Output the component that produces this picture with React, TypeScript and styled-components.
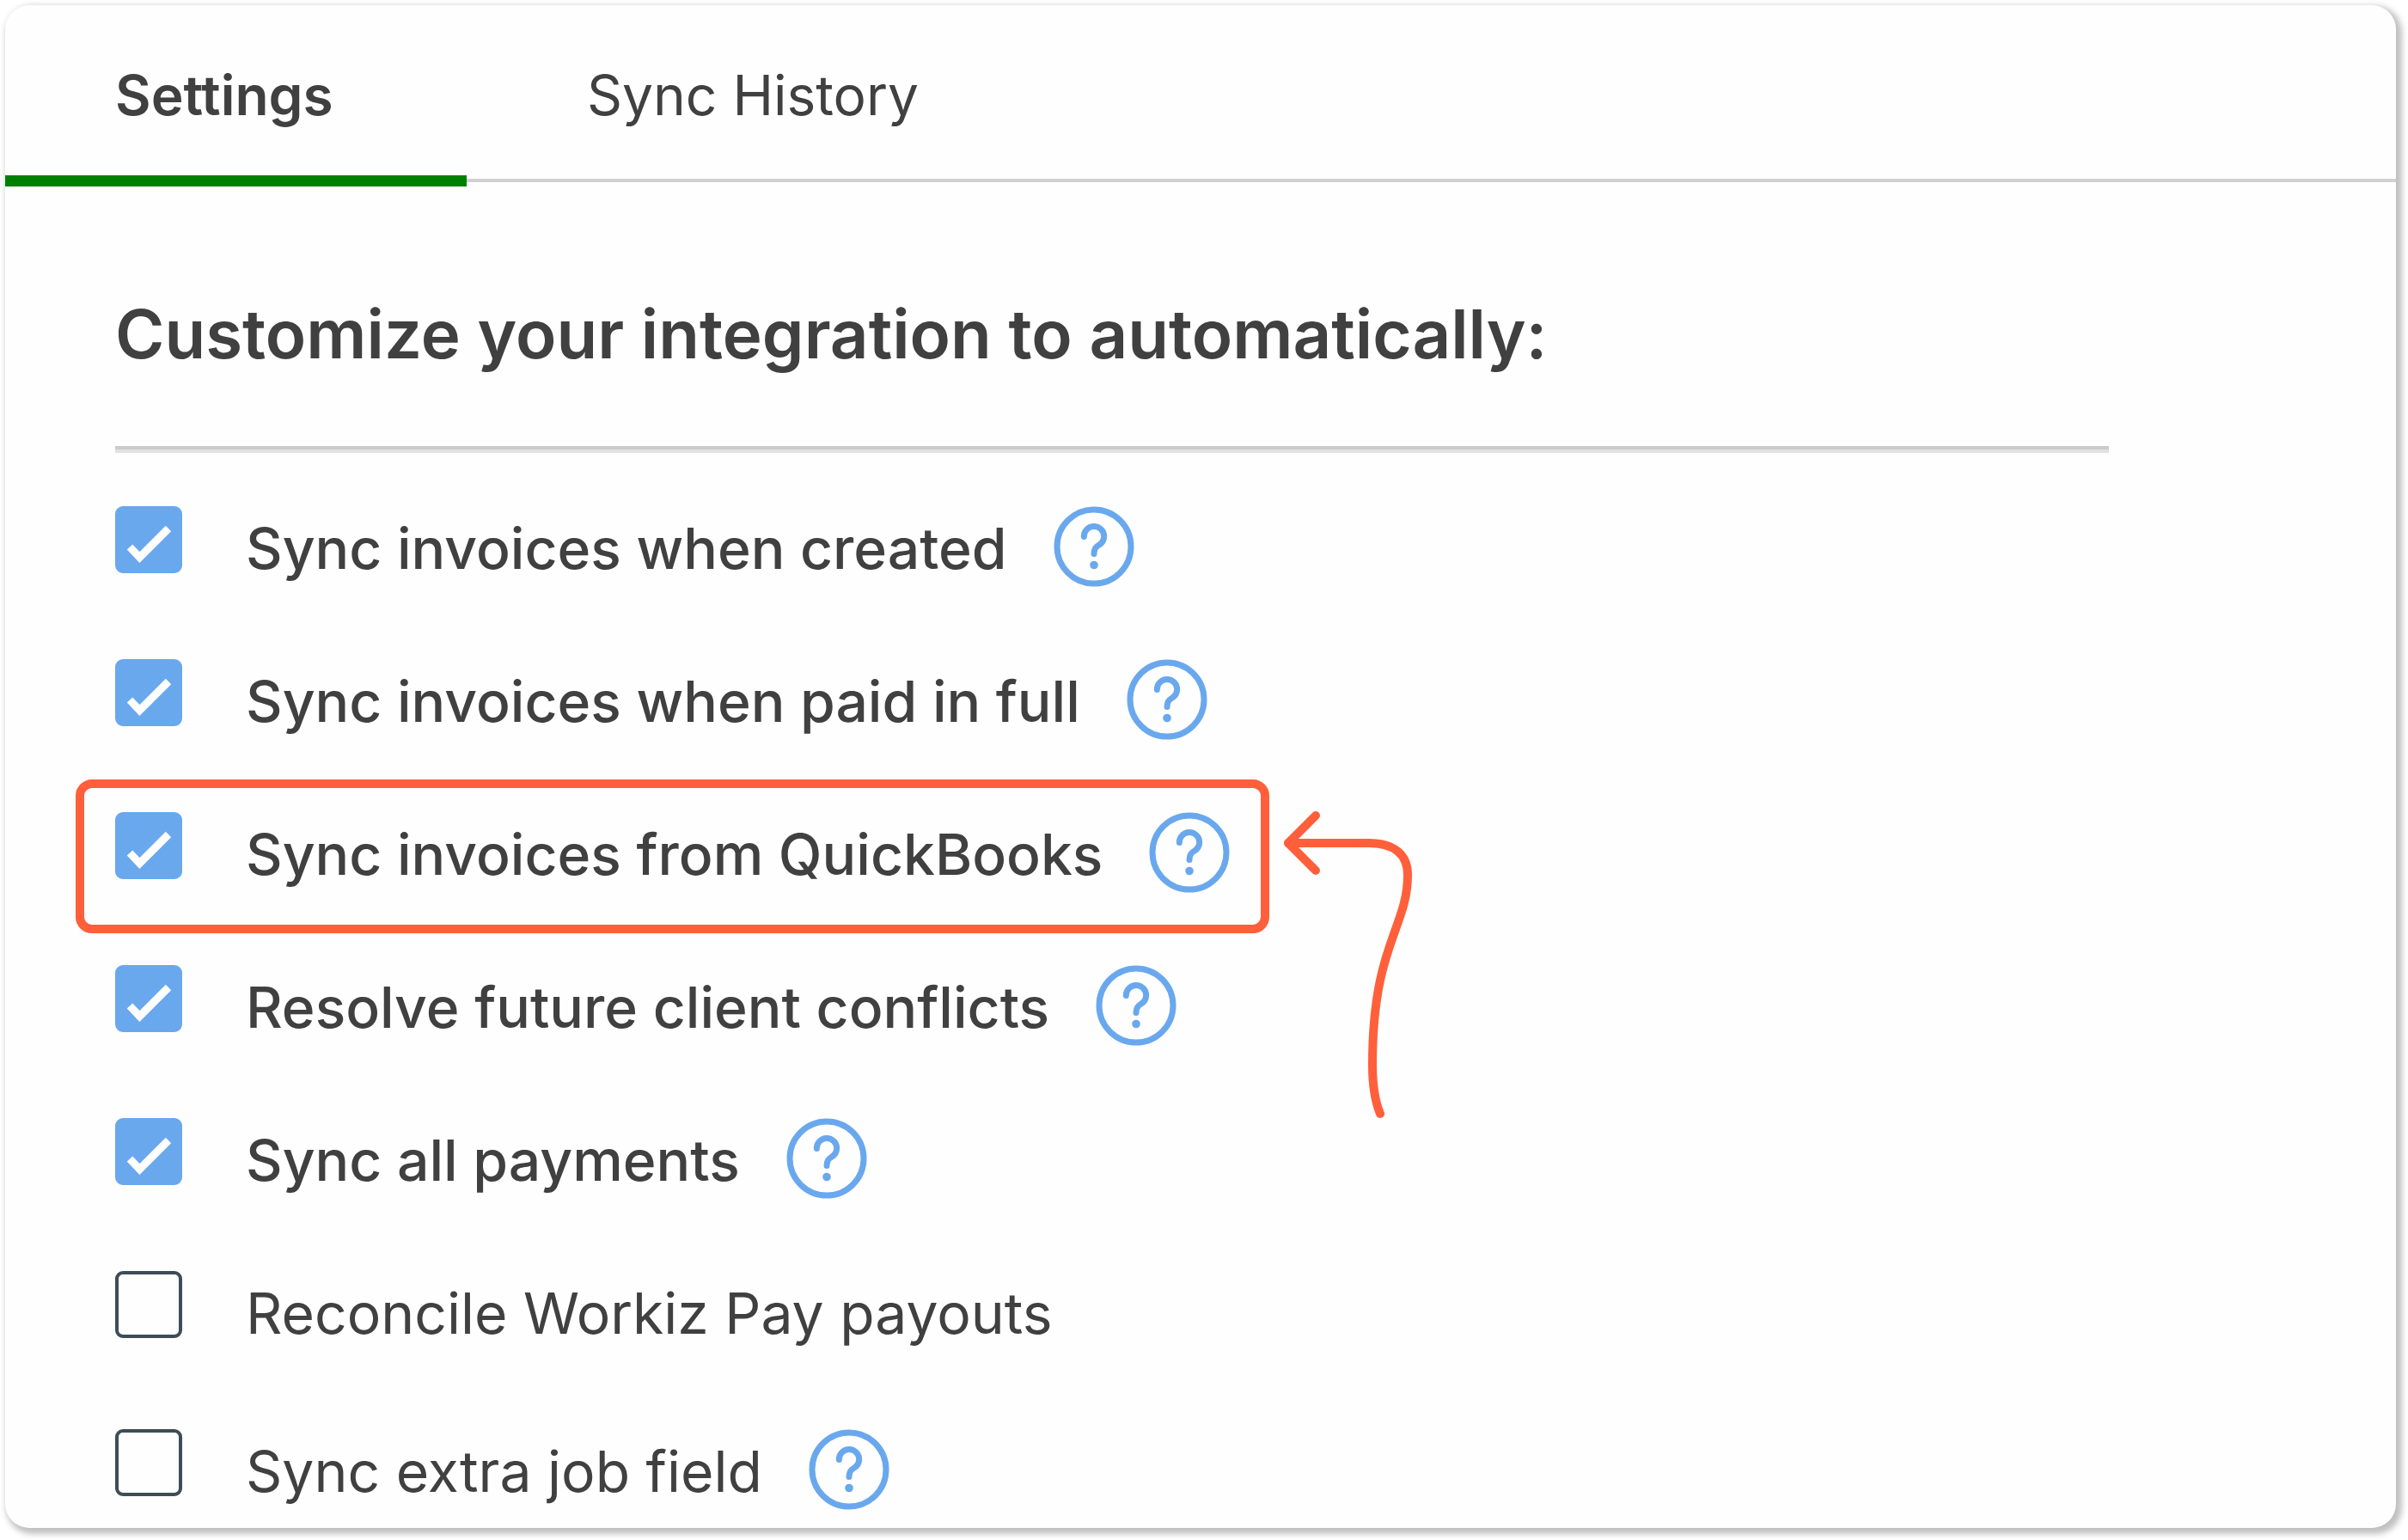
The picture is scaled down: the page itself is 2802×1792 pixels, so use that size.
import React, { useState } from "react";
import styled, { createGlobalStyle } from "styled-components";

const color = {
  text: "#404040",
  blue: "#6aa8ee",
  green: "#008000",
  accent: "#ff5f3b",
  line: "#d1d1d1",
  box: "#3d4d56",
};

const GlobalStyle = createGlobalStyle`
  *, *::before, *::after { box-sizing: border-box; }
  body {
    margin: 0;
    background: #ffffff;
    color: ${color.text};
    font-family: Inter, "Open Sans", sans-serif;
  }
`;

const Page = styled.main`
  padding: 6px 14px 14px 6px;
`;

const Card = styled.section`
  border-radius: 28px;
  background: #fefefe;
  box-shadow: 4px 4px 7px 3px rgba(0, 0, 0, 0.25);
`;

const TabBar = styled.nav`
  display: flex;
  gap: 12px;
  height: 211px;
  background: linear-gradient(${color.line}, ${color.line}) left 0 bottom 5px / 100% 4px no-repeat;
`;

const Tab = styled.button<{ $active: boolean }>`
  min-width: 537px;
  padding: 12px 128px 0;
  border: 0;
  border-bottom: 13px solid ${(p) => (p.$active ? color.green : "transparent")};
  background: none;
  color: inherit;
  font-family: inherit;
  font-size: 64px;
  font-weight: ${(p) => (p.$active ? 600 : 400)};
  line-height: 84px;
  text-align: left;
  white-space: nowrap;
  cursor: pointer;
`;

const Content = styled.div`
  padding: 122px 12% 21px 128px;
`;

const Heading = styled.h1`
  margin: 0;
  padding-bottom: 80px;
  border-bottom: 4px solid #cbcbcb;
  box-shadow: 0 4px 0 #e1e1e1;
  font-size: 78px;
  font-weight: 600;
  line-height: 100px;
`;

const OptionList = styled.ul`
  display: flex;
  flex-direction: column;
  align-items: flex-start;
  gap: 84px;
  margin: 0;
  padding: 66px 0 0;
  list-style: none;
`;

const Option = styled.li<{ $highlighted?: boolean }>`
  position: relative;
  display: flex;
  align-items: flex-start;
  min-height: 100px;

  &:has(button) {
    min-height: 94px;
  }

  ${(p) =>
    p.$highlighted &&
    `&::after {
      content: "";
      position: absolute;
      inset: -38px -46px -47px;
      border: 10px solid ${color.accent};
      border-radius: 19px;
      pointer-events: none;
    }`}
`;

const CheckCell = styled.span`
  display: grid;
  flex: none;
  width: 78px;
  height: 78px;

  & > * {
    grid-area: 1 / 1;
  }
`;

const CheckInput = styled.input`
  appearance: none;
  width: 78px;
  height: 78px;
  margin: 0;
  border: 4px solid ${color.box};
  border-radius: 9px;
  cursor: pointer;

  &:checked {
    border-color: ${color.blue};
    background: ${color.blue};
  }
`;

const Tick = styled.svg`
  width: 78px;
  height: 78px;
  fill: none;
  stroke: #ffffff;
  stroke-width: 9;
  pointer-events: none;
`;

const OptionLabel = styled.label<{ $strong: boolean }>`
  padding: 4px 0 0 74px;
  font-size: 66px;
  font-weight: ${(p) => (p.$strong ? 500 : 400)};
  line-height: 90px;
  white-space: nowrap;
  cursor: pointer;
`;

const HelpButton = styled.button`
  display: block;
  flex: none;
  width: 94px;
  height: 94px;
  margin-left: 54px;
  padding: 0;
  border: 0;
  background: none;
  cursor: pointer;
`;

const HelpDrawing = styled.svg`
  display: block;
  width: 94px;
  height: 94px;
  fill: none;
  stroke: ${color.blue};
  stroke-width: 7;
  stroke-linecap: round;
`;

const Pointer = styled.svg`
  position: absolute;
  top: -6px;
  left: calc(100% + 58px);
  width: 160px;
  height: 366px;
  fill: none;
  stroke: ${color.accent};
  stroke-width: 10;
  stroke-linecap: round;
  stroke-linejoin: round;
  pointer-events: none;
`;

type Setting = {
  id: string;
  label: string;
  on: boolean;
  help: boolean;
  highlighted?: boolean;
};

const initialSettings: Setting[] = [
  { id: "created", label: "Sync invoices when created", on: true, help: true },
  { id: "paid", label: "Sync invoices when paid in full", on: true, help: true },
  { id: "quickbooks", label: "Sync invoices from QuickBooks", on: true, help: true, highlighted: true },
  { id: "conflicts", label: "Resolve future client conflicts", on: true, help: true },
  { id: "payments", label: "Sync all payments", on: true, help: true },
  { id: "payouts", label: "Reconcile Workiz Pay payouts", on: false, help: false },
  { id: "job-field", label: "Sync extra job field", on: false, help: true },
];

function HelpIcon() {
  return (
    <HelpDrawing viewBox="0 0 94 94" aria-hidden="true">
      <circle cx="47" cy="47" r="43" />
      <path d="M35.3 35.5A11.7 11.7 0 0 1 58.7 35C58.7 40.5 56 43.5 52 45.7C48.5 47.7 47 50 47 55.5" />
      <circle cx="47" cy="68.5" r="4.8" fill={color.blue} stroke="none" />
    </HelpDrawing>
  );
}

function PointerArrow() {
  return (
    <Pointer viewBox="0 0 160 366" aria-hidden="true">
      <path d="M42 10L10 42L42 74" />
      <path d="M10 42H103C134 42 149 56 149 79C149 141 108 160 108 300C108 322 110 340 117 357" />
    </Pointer>
  );
}

export default function App() {
  const [tab, setTab] = useState("Settings");
  const [settings, setSettings] = useState(initialSettings);

  const toggle = (id: string) =>
    setSettings((all) => all.map((s) => (s.id === id ? { ...s, on: !s.on } : s)));

  return (
    <Page>
      <GlobalStyle />
      <Card>
        <TabBar>
          {["Settings", "Sync History"].map((name) => (
            <Tab key={name} type="button" $active={name === tab} onClick={() => setTab(name)}>
              {name}
            </Tab>
          ))}
        </TabBar>
        <Content>
          <Heading>Customize your integration to automatically:</Heading>
          <OptionList>
            {settings.map((s) => (
              <Option key={s.id} $highlighted={s.highlighted}>
                <CheckCell>
                  <CheckInput id={s.id} type="checkbox" checked={s.on} onChange={() => toggle(s.id)} />
                  {s.on && (
                    <Tick viewBox="0 0 78 78" aria-hidden="true">
                      <path d="M17 47.5L28.5 59.5L62 26" />
                    </Tick>
                  )}
                </CheckCell>
                <OptionLabel htmlFor={s.id} $strong={s.on}>
                  {s.label}
                </OptionLabel>
                {s.help && (
                  <HelpButton type="button" aria-label={`Help: ${s.label}`}>
                    <HelpIcon />
                  </HelpButton>
                )}
                {s.highlighted && <PointerArrow />}
              </Option>
            ))}
          </OptionList>
        </Content>
      </Card>
    </Page>
  );
}
